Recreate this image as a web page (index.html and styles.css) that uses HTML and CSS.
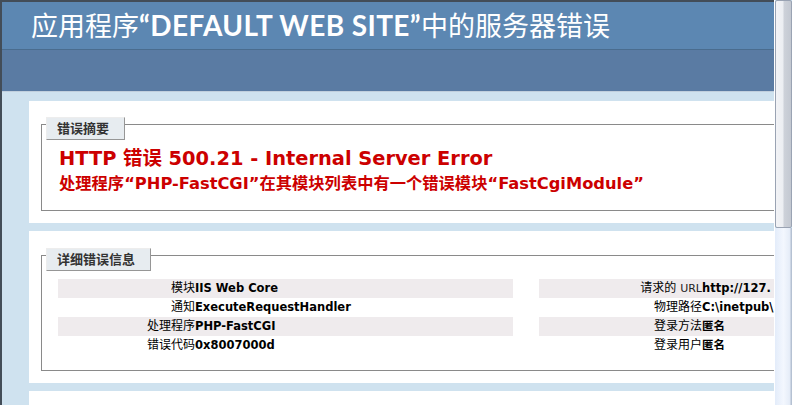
FILE: index.html
```html
<!DOCTYPE html>
<html lang="zh-CN">
<head>
<meta charset="utf-8">
<title>IIS 7.5 详细错误 - 500.21 - Internal Server Error</title>
<link rel="stylesheet" href="styles.css">
</head>
<body>
<div class="window">
  <div class="viewport">
    <div class="header"><h1>应用程序<span class="lat">“DEFAULT WEB SITE”</span>中的服务器错误</h1></div>
    <div class="server-version"></div>
    <div class="content">
      <div class="card">
        <div class="box summary">
          <div class="legend">错误摘要</div>
          <h2>HTTP 错误 500.21 - Internal Server Error</h2>
          <h3>处理程序“PHP-FastCGI”在其模块列表中有一个错误模块“FastCgiModule”</h3>
        </div>
      </div>
      <div class="card">
        <div class="box detail">
          <div class="legend">详细错误信息</div>
          <div class="details">
            <table class="left">
              <tr class="alt"><th>模块</th><td>IIS Web Core</td></tr>
              <tr><th>通知</th><td>ExecuteRequestHandler</td></tr>
              <tr class="alt"><th>处理程序</th><td>PHP-FastCGI</td></tr>
              <tr><th>错误代码</th><td>0x8007000d</td></tr>
            </table>
            <table class="right">
              <tr class="alt"><th>请求的 <span class="url">URL</span></th><td>http://127.</td></tr>
              <tr><th>物理路径</th><td>C:\inetpub\</td></tr>
              <tr class="alt"><th>登录方法</th><td>匿名</td></tr>
              <tr><th>登录用户</th><td>匿名</td></tr>
            </table>
          </div>
        </div>
      </div>
      <div class="card last"></div>
    </div>
  </div>
  <div class="scrollbar"><div class="thumb"></div><div class="track"></div></div>
</div>
</body>
</html>
```

FILE: styles.css
```css
html, body {
  margin: 0;
  padding: 0;
}
body {
  width: 792px;
  height: 405px;
  overflow: hidden;
  font-family: "DejaVu Sans", "Noto Sans CJK SC", sans-serif;
  font-size: 11.2px;
  background: #CBE1EF;
}
.window {
  display: flex;
  height: 405px;
}
.viewport {
  flex: none;
  width: 772px;
  height: 403px;
  border-top: 2px solid #434d58;
  border-left: 2px solid #434d58;
  overflow: hidden;
  background: #CFE2EF;
}
.header {
  height: 47px;
  background: #5C87B2;
  padding-left: 29px;
  display: flex;
  align-items: center;
}
h1 {
  margin: 0;
  font-family: "Lato", "Noto Sans CJK SC", sans-serif;
  font-size: 27px;
  font-weight: normal;
  line-height: 30px;
  color: #fff;
  white-space: nowrap;
}
h1 .lat {
  font-weight: bold;
  font-size: 28px;
  letter-spacing: 0.4px;
}
.server-version {
  height: 41px;
  background: #5A7BA3;
  border-top: 1px solid #4A6C8E;
  border-bottom: 1px solid #C1CFDD;
}
.content {
  margin: 9px 0 0 27px;
  width: 1400px;
}
.card {
  background: #fff;
  padding: 10px;
  margin-bottom: 8px;
}
.card.last {
  height: 40px;
}
.box {
  margin: 13px 0 2px 2px;
  border: 1px solid #8a8a8a;
  padding: 0 15px 10px 15px;
}
.box.summary {
  padding-bottom: 16px;
}
.box.detail {
  margin-top: 14px;
  padding-bottom: 11px;
}
.legend {
  width: max-content;
  margin: -8px 0 8px -11px;
  padding: 4px 15px 4px 10px;
  font-size: 13px;
  line-height: 13px;
  font-weight: bold;
  color: #333;
  background: #E7ECF0;
  border-top: 1px solid #EDEDED;
  border-left: 1px solid #EDEDED;
  border-right: 1px solid #969696;
  border-bottom: 1px solid #969696;
}
h2 {
  margin: 0 0 0 2px;
  font-size: 19.4px;
  line-height: 22px;
  color: #CC0000;
  font-weight: bold;
  white-space: nowrap;
}
h3 {
  margin: 4px 0 0 2px;
  font-size: 16.3px;
  line-height: 20px;
  color: #CC0000;
  font-weight: bold;
  white-space: nowrap;
}
.details {
  display: flex;
  align-items: flex-start;
  gap: 26px;
  margin: 4px 0 4px 1px;
}
table {
  border-collapse: collapse;
  border-spacing: 0;
}
table.left {
  width: 455px;
}
table.right {
  width: 800px;
}
th, td {
  padding: 3px 0;
  line-height: 13px;
  vertical-align: top;
  white-space: nowrap;
  color: #000;
}
th {
  font-weight: normal;
  text-align: right;
  font-size: 12px;
}
table.left th {
  width: 137px;
}
table.right th {
  width: 163px;
}
td {
  text-align: left;
  font-weight: bold;
  font-size: 11.5px;
}
.url {
  font-size: 11px;
  color: #222;
}
tr.alt th, tr.alt td {
  background: #EFEBED;
}
.scrollbar {
  flex: none;
  width: 17px;
  height: 405px;
  border-left: 1px solid #ffffff;
  display: flex;
  flex-direction: column;
}
.thumb {
  flex: none;
  height: 226px;
  border: 1px solid #9aa3b3;
  border-radius: 2px;
  background: linear-gradient(to right, #f2f3f6 0%, #eceef2 45%, #cdd1d9 55%, #c3c8d1 100%);
}
.track {
  flex: 1;
  background: linear-gradient(to right, #e3ecfa 0%, #f3f7fe 50%, #e6edf8 85%, #a9b6c9 100%);
}
```
